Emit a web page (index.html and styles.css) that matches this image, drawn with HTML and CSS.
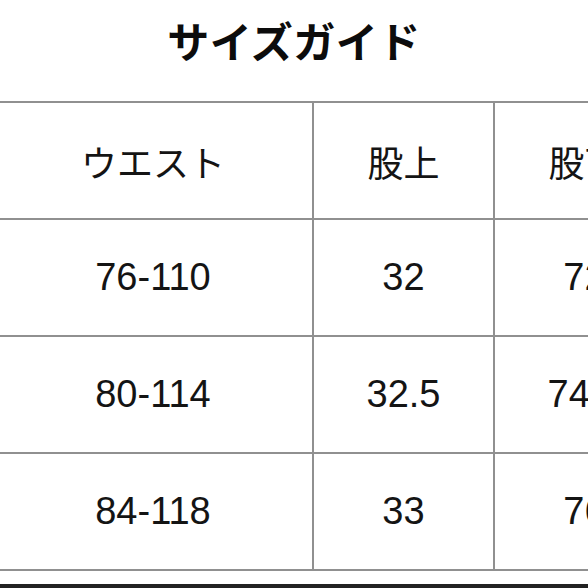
FILE: index.html
```html
<!DOCTYPE html>
<html lang="ja">
<head>
<meta charset="utf-8">
<link rel="stylesheet" href="styles.css">
</head>
<body>
<div class="page">
  <h1 class="title">サイズガイド</h1>
  <div class="table">
    <div class="row">
      <div class="cell head">ウエスト</div>
      <div class="cell head">股上</div>
      <div class="cell head">股下</div>
    </div>
    <div class="row">
      <div class="cell">76-110</div>
      <div class="cell">32</div>
      <div class="cell">72</div>
    </div>
    <div class="row">
      <div class="cell">80-114</div>
      <div class="cell">32.5</div>
      <div class="cell">74.5</div>
    </div>
    <div class="row">
      <div class="cell">84-118</div>
      <div class="cell">33</div>
      <div class="cell">76</div>
    </div>
  </div>
  <div class="edge"></div>
</div>
</body>
</html>
```
FILE: styles.css
```css
html, body {
  margin: 0;
  padding: 0;
  background: #fff;
}
body {
  width: 588px;
  height: 588px;
  overflow: hidden;
  font-family: "Liberation Sans", "Noto Sans CJK JP", sans-serif;
  color: #141414;
}
.page {
  width: 588px;
  height: 588px;
  overflow: hidden;
  display: flex;
  flex-direction: column;
}
.title {
  margin: 0;
  height: 102px;
  display: flex;
  align-items: center;
  justify-content: center;
  padding-bottom: 22px;
  box-sizing: border-box;
  font-family: "Noto Sans CJK JP", sans-serif;
  font-weight: 700;
  font-size: 42px;
  letter-spacing: 0.5px;
  color: #0c0c0c;
}
.table {
  margin-left: -6px;
  width: 700px;
  border-top: 2px solid #909090;
}
.row {
  display: grid;
  grid-template-columns: 320px 181px 181px;
}
.cell {
  height: 117px;
  box-sizing: border-box;
  border-right: 2px solid #909090;
  border-bottom: 2px solid #909090;
  display: flex;
  align-items: center;
  justify-content: center;
  font-size: 38px;
  white-space: nowrap;
}
.head {
  font-family: "Noto Sans CJK JP", sans-serif;
  font-size: 36px;
}
.edge {
  margin-top: 13px;
  height: 4px;
  background: #222;
}
```
